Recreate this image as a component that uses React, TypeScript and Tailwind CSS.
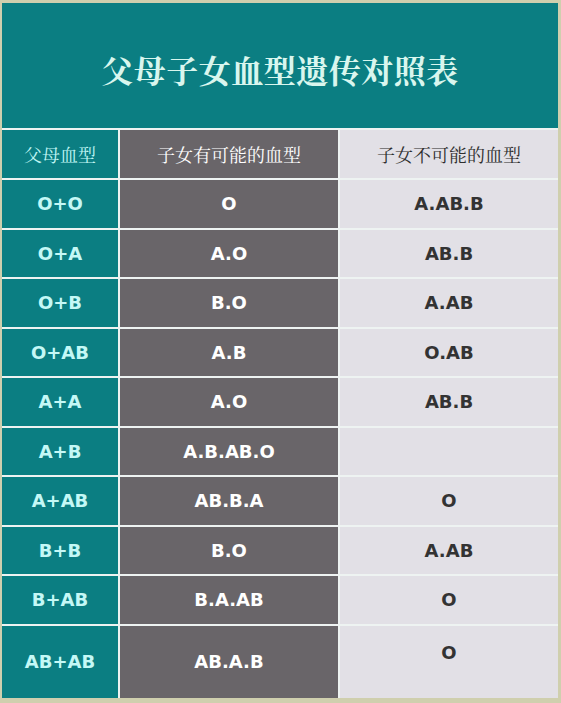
const rows: [string, string, string][] = [
  ['O+O', 'O', 'A.AB.B'],
  ['O+A', 'A.O', 'AB.B'],
  ['O+B', 'B.O', 'A.AB'],
  ['O+AB', 'A.B', 'O.AB'],
  ['A+A', 'A.O', 'AB.B'],
  ['A+B', 'A.B.AB.O', ''],
  ['A+AB', 'AB.B.A', 'O'],
  ['B+B', 'B.O', 'A.AB'],
  ['B+AB', 'B.A.AB', 'O'],
  ['AB+AB', 'AB.A.B', 'O'],
]

export default function App() {
  return (
    <div className="w-[561px] h-[703px] bg-[#cfcfae] pt-[3px] pl-[2px] pr-[3px] pb-[5px]">
      <div className="h-full flex flex-col gap-[2px] bg-[#eef3f2]">
        {/* Title */}
        <div className="h-[125px] bg-[#0b7e82] flex items-center justify-center">
          <h1 className="mt-[6px] text-[32px] font-bold tracking-[0.5px] text-[#d9f6ee] font-['Noto_Serif_CJK_SC','Noto_Sans_CJK_SC',serif]">
            父母子女血型遗传对照表
          </h1>
        </div>

        {/* Table */}
        <div className="flex-1 grid grid-cols-[116px_218px_218px] grid-rows-[48px_repeat(9,47.5px)_72.5px] gap-[2px] text-[18px] font-['Noto_Serif_CJK_SC','Noto_Sans_CJK_SC',serif]">
          <div className="bg-[#0b7e82] flex items-center justify-center text-[#bff5f3]">父母血型</div>
          <div className="bg-[#696569] flex items-center justify-center text-white">子女有可能的血型</div>
          <div className="bg-[#e2e0e6] flex items-center justify-center text-[#2e2e2e]">子女不可能的血型</div>

          {rows.map(([parents, possible, impossible], i) => {
            const last = i === rows.length - 1
            return [
              <div
                key={`p${i}`}
                className="bg-[#0b7e82] flex items-center justify-center font-bold text-[#c4f8f6] font-['DejaVu_Sans',Verdana,sans-serif]"
              >
                {parents}
              </div>,
              <div
                key={`y${i}`}
                className="bg-[#696569] flex items-center justify-center font-bold text-white font-['DejaVu_Sans',Verdana,sans-serif]"
              >
                {possible}
              </div>,
              <div
                key={`n${i}`}
                className={
                  last
                    ? "bg-[#e2e0e6] flex items-start justify-center pt-[13px] font-bold text-[#333] font-['DejaVu_Sans',Verdana,sans-serif]"
                    : "bg-[#e2e0e6] flex items-center justify-center font-bold text-[#333] font-['DejaVu_Sans',Verdana,sans-serif]"
                }
              >
                {impossible}
              </div>,
            ]
          })}
        </div>
      </div>
    </div>
  )
}
